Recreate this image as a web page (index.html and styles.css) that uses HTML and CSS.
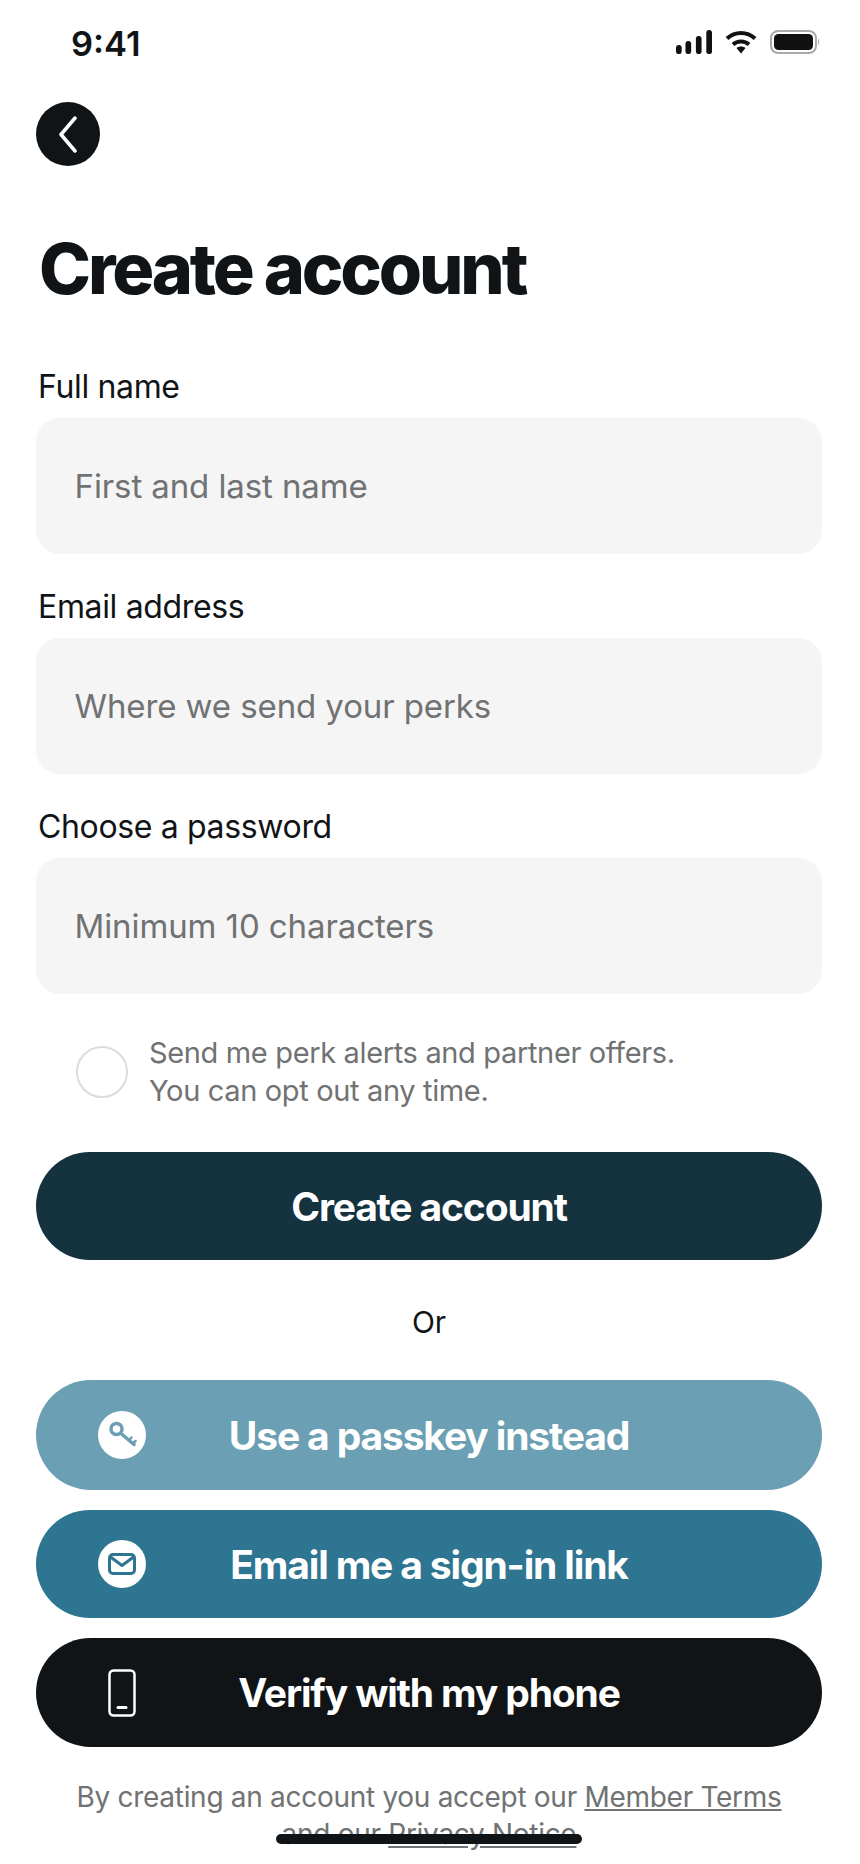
FILE: index.html
```html
<!DOCTYPE html>
<html lang="en">
<head>
    <meta charset="UTF-8">
    <meta name="viewport" content="width=device-width, initial-scale=1.0">
    <title>Create account</title>
    <link rel="stylesheet" href="styles.css">
</head>
<body>
    <div class="status-bar">
        <span class="status-time">9:41</span>
        <div class="status-icons">
            <svg width="36" height="24" viewBox="0 0 38 24" preserveAspectRatio="none" fill="#111">
                <rect x="0" y="15" width="6" height="9" rx="2.5"/>
                <rect x="10" y="11" width="6" height="13" rx="2.5"/>
                <rect x="21" y="6" width="6" height="18" rx="2.5"/>
                <rect x="32" y="0" width="6" height="24" rx="2.5"/>
            </svg>
            <svg width="32" height="24" viewBox="0 0 32 24" fill="none" stroke="#111" stroke-width="4">
                <path d="M2 8.5C10 1 22 1 30 8.5"/>
                <path d="M8 14.5C12.500 10.500 19.500 10.500 24 14.500"/>
                <path d="M11.500 18L16 23.500L20.500 18C18 16 14 16 11.500 18Z" fill="#111" stroke="none"/>
            </svg>
            <svg width="50" height="24" viewBox="0 0 50 24">
                <rect x="1" y="1" width="45" height="22" rx="7" fill="none" stroke="#aaa" stroke-width="2"/>
                <rect x="4" y="4" width="39" height="16" rx="4.500" fill="#111"/>
                <path d="M48 8.500C49.500 9.500 49.500 14.500 48 15.500Z" fill="#aaa"/>
            </svg>
        </div>
    </div>

    <main class="page">
        <button class="back-btn" aria-label="Back">
            <svg width="22" height="38" viewBox="0 0 22 38" fill="none" stroke="#fff" stroke-width="3.500" stroke-linecap="round" stroke-linejoin="round">
                <path d="M18 3L4 19.500L18 36"/>
            </svg>
        </button>

        <h1 class="title">Create account</h1>

        <div class="field">
            <label class="field-label">Full name</label>
            <div class="field-input">First and last name</div>
        </div>
        <div class="field">
            <label class="field-label">Email address</label>
            <div class="field-input">Where we send your perks</div>
        </div>
        <div class="field">
            <label class="field-label">Choose a password</label>
            <div class="field-input">Minimum 10 characters</div>
        </div>

        <div class="opt-in">
            <span class="opt-check"></span>
            <p class="opt-text">Send me perk alerts and partner offers.<br>You can opt out any time.</p>
        </div>

        <button class="btn btn-primary">Create account</button>

        <p class="or">Or</p>

        <div class="alt-list">
            <button class="btn btn-passkey">
                <span class="btn-icon">
                    <svg width="32" height="32" viewBox="0 0 32 32" fill="none" stroke="#6b9fb3" stroke-width="3.500" stroke-linecap="round">
                        <circle cx="10.500" cy="10" r="5.500"/>
                        <path d="M15 14.500L28 25.500"/>
                        <path d="M23 21.500L25.500 18.500M27 24.500L29.500 22" stroke-width="2.500"/>
                    </svg>
                </span>
                Use a passkey instead
            </button>
            <button class="btn btn-email">
                <span class="btn-icon">
                    <svg width="28" height="22" viewBox="0 0 28 22" fill="none" stroke="#2e7591" stroke-width="3" stroke-linejoin="round">
                        <rect x="1.500" y="1.500" width="25" height="19" rx="3.500"/>
                        <path d="M2.500 4L14 12.500L25.500 4"/>
                    </svg>
                </span>
                Email me a sign-in link
            </button>
            <button class="btn btn-phone">
                <span class="btn-icon btn-icon-plain">
                    <svg width="28" height="48" viewBox="0 0 28 48" fill="none" stroke="#fff" stroke-width="2.500">
                        <rect x="1.500" y="1.500" width="25" height="45" rx="4"/>
                        <path d="M10 38.500H18" stroke-width="3" stroke-linecap="round"/>
                    </svg>
                </span>
                Verify with my phone
            </button>
        </div>

        <p class="legal">By creating an account you accept our <a href="#">Member Terms</a><br>and our <a href="#">Privacy Notice</a></p>
    </main>

    <div class="home-indicator"></div>
</body>
</html>
```

FILE: styles.css
```css
* {
    box-sizing: border-box;
}
html, body {
    height: 100%;
}
body {
    margin: 0;
    background: #fff;
    color: #111416;
    font-family: Inter, "Liberation Sans", sans-serif;
    position: relative;
    overflow: hidden;
}
.status-bar {
    height: 86px;
    padding: 24px 40px 0 71px;
    display: flex;
    justify-content: space-between;
    align-items: flex-start;
}
.status-time {
    font-size: 34.5px;
    line-height: 40px;
    font-weight: 600;
}
.status-icons {
    display: flex;
    align-items: center;
    gap: 13px;
    padding-top: 6px;
}
.page {
    padding: 16px 38px 0 36px;
}
.back-btn {
    width: 64px;
    height: 64px;
    border: 0;
    padding: 0;
    border-radius: 50%;
    background: #111416;
    display: flex;
    align-items: center;
    justify-content: center;
}
.title {
    margin: 62px 0 0 3px;
    font-size: 70px;
    line-height: 82px;
    font-weight: 800;
    letter-spacing: -3.15px;
}
.field {
    margin-top: 33px;
}
.title + .field {
    margin-top: 57px;
}
.field-label {
    display: block;
    margin-left: 2px;
    font-size: 32px;
    line-height: 40px;
    letter-spacing: -0.35px;
}
.field-input {
    margin-top: 11px;
    height: 136px;
    padding: 0 38.5px;
    display: flex;
    align-items: center;
    background: #f5f5f5;
    border-radius: 24px;
    color: #707273;
    font-size: 33px;
    letter-spacing: -0.1px;
}
.opt-in {
    margin: 40px 0 0 40px;
    display: flex;
    align-items: center;
    gap: 21px;
}
.opt-check {
    width: 52px;
    height: 52px;
    border: 2px solid #dcdcdc;
    border-radius: 50%;
    flex-shrink: 0;
}
.opt-text {
    margin: 0;
    color: #707273;
    font-size: 29px;
    line-height: 38px;
    letter-spacing: -0.35px;
}
.btn {
    position: relative;
    width: 100%;
    display: block;
    border: 0;
    border-radius: 56px;
    color: #fff;
    font-family: inherit;
    font-size: 39px;
    font-weight: 700;
    letter-spacing: -1.15px;
    text-align: center;
}
.btn-primary {
    margin-top: 42px;
    height: 108px;
    background: #15323f;
}
.or {
    margin: 42px 0 38px;
    font-size: 30px;
    line-height: 40px;
    text-align: center;
}
.alt-list {
    display: flex;
    flex-direction: column;
    gap: 20px;
}
.btn-passkey {
    height: 110px;
    background: #6b9fb3;
}
.btn-email {
    height: 108px;
    background: #2e7591;
}
.btn-phone {
    height: 109px;
    background: #111416;
}
.btn-icon {
    position: absolute;
    left: 62px;
    top: 50%;
    width: 48px;
    height: 48px;
    transform: translateY(-50%);
    border-radius: 50%;
    background: #fff;
    display: flex;
    align-items: center;
    justify-content: center;
}
.btn-icon-plain {
    background: none;
}
.legal {
    margin: 32px 0 0;
    color: #707273;
    font-size: 28px;
    line-height: 37px;
    letter-spacing: -0.29px;
    text-align: center;
}
.legal a {
    color: inherit;
}
.home-indicator {
    position: absolute;
    left: 276px;
    top: 1834px;
    width: 306px;
    height: 10px;
    border-radius: 5px;
    background: #111416;
}
```
